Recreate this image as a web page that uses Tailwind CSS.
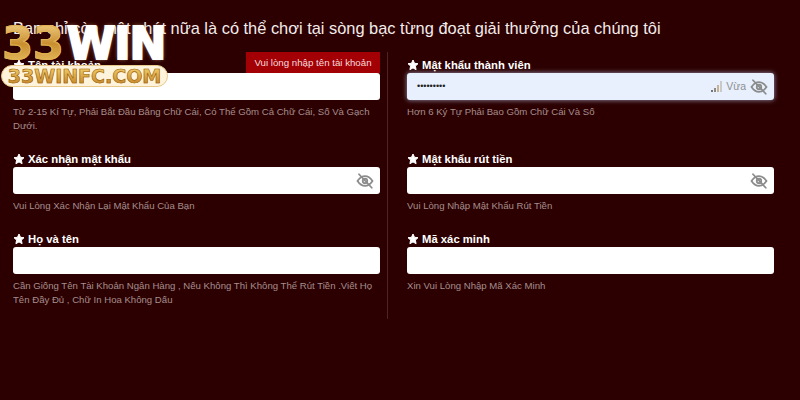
<!DOCTYPE html>
<html lang="vi">
<head>
<meta charset="utf-8">
<script src="https://cdn.jsdelivr.net/npm/@tailwindcss/browser@4"></script>
</head>
<body class="m-0">
<div class="relative w-[800px] h-[400px] overflow-hidden bg-[#2c0000] font-['Liberation_Sans',Arial,sans-serif] text-white">
  <h1 class="pl-[13px] pt-[19px] h-[52px] text-[16.4px] leading-[19px] font-normal text-[#f3ecec]">Bạn chỉ còn một chút nữa là có thể chơi tại sòng bạc từng đoạt giải thưởng của chúng tôi</h1>

  <div class="flex">
    <div class="w-[388px] h-[267px] pl-[13px] pr-[7px] border-r border-[#4a2426]">
      <div class="relative h-[94px] pt-[6px]">
        <div class="flex items-center gap-[3px] h-[14px] mb-[1px] text-[11.3px] font-bold"><svg class="w-[12px] h-[12px]" viewBox="0 0 24 24" fill="#fff" stroke="#fff" stroke-width="2" stroke-linejoin="round"><path d="M12 2l3 6.600 7 .8-5.200 4.800 1.400 7.200L12 17.800l-6.200 3.600 1.400-7.200L2 9.400l7-.8z"/></svg><span>Tên tài khoản</span></div>
        <div class="absolute right-0 top-0 w-[134px] h-[21px] bg-[#a30006] text-[9.7px] leading-[21px] text-center text-[#f6dcdc]">Vui lòng nhập tên tài khoản</div>
        <div class="h-[27px] rounded-[3px] bg-white"></div>
        <p class="mt-[5px] text-[9.6px] leading-[14px] text-[#a58e8e]">Từ 2-15 Kí Tự, Phải Bắt Đầu Bằng Chữ Cái, Có Thể Gồm Cả Chữ Cái, Số Và Gạch Dưới.</p>
      </div>
      <div class="h-[80px] pt-[6px]">
        <div class="flex items-center gap-[3px] h-[14px] mb-[1px] text-[11.3px] font-bold"><svg class="w-[12px] h-[12px]" viewBox="0 0 24 24" fill="#fff" stroke="#fff" stroke-width="2" stroke-linejoin="round"><path d="M12 2l3 6.600 7 .8-5.200 4.800 1.400 7.200L12 17.800l-6.200 3.600 1.400-7.200L2 9.400l7-.8z"/></svg><span>Xác nhận mật khẩu</span></div>
        <div class="h-[27px] rounded-[3px] bg-white flex items-center justify-end pr-[6px]">
          <svg class="w-[18px] h-[18px]" viewBox="0 0 24 24" fill="none" stroke="#8c8c8c" stroke-width="2.400" stroke-linecap="round"><path d="M2 12c3-4.500 6.500-6.500 10-6.500S19 7.500 22 12c-3 4.500-6.500 6.500-10 6.500S5 16.500 2 12z"/><circle cx="12" cy="12" r="3"/><path d="M4 3l17 18"/></svg>
        </div>
        <p class="mt-[5px] text-[9.6px] leading-[14px] text-[#a58e8e]">Vui Lòng Xác Nhận Lại Mật Khẩu Của Bạn</p>
      </div>
      <div class="pt-[6px]">
        <div class="flex items-center gap-[3px] h-[14px] mb-[1px] text-[11.3px] font-bold"><svg class="w-[12px] h-[12px]" viewBox="0 0 24 24" fill="#fff" stroke="#fff" stroke-width="2" stroke-linejoin="round"><path d="M12 2l3 6.600 7 .8-5.200 4.800 1.400 7.200L12 17.800l-6.200 3.600 1.400-7.200L2 9.400l7-.8z"/></svg><span>Họ và tên</span></div>
        <div class="h-[27px] rounded-[3px] bg-white"></div>
        <p class="mt-[5px] text-[9.6px] leading-[14px] text-[#a58e8e]">Cần Giống Tên Tài Khoản Ngân Hàng , Nếu Không Thì Không Thể Rút Tiền .Viết Họ Tên Đầy Đủ , Chữ In Hoa Không Dấu</p>
      </div>
    </div>

    <div class="w-[367px] ml-[19px]">
      <div class="h-[94px] pt-[6px]">
        <div class="flex items-center gap-[3px] h-[14px] mb-[1px] text-[11.3px] font-bold"><svg class="w-[12px] h-[12px]" viewBox="0 0 24 24" fill="#fff" stroke="#fff" stroke-width="2" stroke-linejoin="round"><path d="M12 2l3 6.600 7 .8-5.200 4.800 1.400 7.200L12 17.800l-6.200 3.600 1.400-7.200L2 9.400l7-.8z"/></svg><span>Mật khẩu thành viên</span></div>
        <div class="h-[27px] rounded-[3px] bg-[#e8f0fe] shadow-[0_0_5px_rgba(200,215,255,0.7)] flex items-center pl-[10px] pr-[6px]">
          <span class="text-[9px] leading-none text-[#222]">•••••••••</span>
          <div class="ml-auto flex items-end gap-[1px] h-[11px]">
            <i class="block w-[2px] h-[2px] bg-[#777]"></i><i class="block w-[2px] h-[4px] bg-[#8a8a8a]"></i><i class="block w-[2px] h-[7px] bg-[#c9b28f]"></i><i class="block w-[2px] h-[11px] bg-[#c9c9c9]"></i>
          </div>
          <span class="ml-[4px] mr-[4px] text-[10.5px] text-[#8f8f8f]">Vừa</span>
          <svg class="w-[18px] h-[18px]" viewBox="0 0 24 24" fill="none" stroke="#8c8c8c" stroke-width="2.400" stroke-linecap="round"><path d="M2 12c3-4.500 6.500-6.500 10-6.500S19 7.500 22 12c-3 4.500-6.500 6.500-10 6.500S5 16.500 2 12z"/><circle cx="12" cy="12" r="3"/><path d="M4 3l17 18"/></svg>
        </div>
        <p class="mt-[5px] text-[9.6px] leading-[14px] text-[#a58e8e]">Hơn 6 Ký Tự Phải Bao Gồm Chữ Cái Và Số</p>
      </div>
      <div class="h-[80px] pt-[6px]">
        <div class="flex items-center gap-[3px] h-[14px] mb-[1px] text-[11.3px] font-bold"><svg class="w-[12px] h-[12px]" viewBox="0 0 24 24" fill="#fff" stroke="#fff" stroke-width="2" stroke-linejoin="round"><path d="M12 2l3 6.600 7 .8-5.200 4.800 1.400 7.200L12 17.800l-6.200 3.600 1.400-7.200L2 9.400l7-.8z"/></svg><span>Mật khẩu rút tiền</span></div>
        <div class="h-[27px] rounded-[3px] bg-white flex items-center justify-end pr-[6px]">
          <svg class="w-[18px] h-[18px]" viewBox="0 0 24 24" fill="none" stroke="#8c8c8c" stroke-width="2.400" stroke-linecap="round"><path d="M2 12c3-4.500 6.500-6.500 10-6.500S19 7.500 22 12c-3 4.500-6.500 6.500-10 6.500S5 16.500 2 12z"/><circle cx="12" cy="12" r="3"/><path d="M4 3l17 18"/></svg>
        </div>
        <p class="mt-[5px] text-[9.6px] leading-[14px] text-[#a58e8e]">Vui Lòng Nhập Mật Khẩu Rút Tiền</p>
      </div>
      <div class="pt-[6px]">
        <div class="flex items-center gap-[3px] h-[14px] mb-[1px] text-[11.3px] font-bold"><svg class="w-[12px] h-[12px]" viewBox="0 0 24 24" fill="#fff" stroke="#fff" stroke-width="2" stroke-linejoin="round"><path d="M12 2l3 6.600 7 .8-5.200 4.800 1.400 7.200L12 17.800l-6.200 3.600 1.400-7.200L2 9.400l7-.8z"/></svg><span>Mã xác minh</span></div>
        <div class="h-[27px] rounded-[3px] bg-white"></div>
        <p class="mt-[5px] text-[9.6px] leading-[14px] text-[#a58e8e]">Xin Vui Lòng Nhập Mã Xác Minh</p>
      </div>
    </div>
  </div>

  <div class="absolute left-0 top-[15px] w-[170px] h-[74px] font-['DejaVu_Sans',sans-serif] font-bold">
    <div class="absolute left-[2px] top-[2px] flex items-center text-[45px] leading-[54px] whitespace-nowrap tracking-[-0.5px]">
      <span class="bg-gradient-to-b from-[#f9dd92] via-[#c98f2e] to-[#f0cc70] bg-clip-text text-transparent [-webkit-text-stroke:1px_#e0b252]">33</span><span class="ml-[3px] text-white [-webkit-text-stroke:2px_#fff] [text-shadow:0_0_4px_rgba(255,200,150,0.7)] text-[44px] tracking-[-1px]">WIN</span>
    </div>
    <div class="absolute left-[1px] top-[50px] w-[167px] h-[22px] rounded-full bg-[#fff3dc] border border-[#e8c98a] flex items-center justify-center text-[19px] leading-none whitespace-nowrap"><span class="bg-gradient-to-b from-[#f5d16b] to-[#c07f1e] bg-clip-text text-transparent [-webkit-text-stroke:0.6px_#9a6414]">33WINFC.COM</span></div>
  </div>
</div>
</body>
</html>
